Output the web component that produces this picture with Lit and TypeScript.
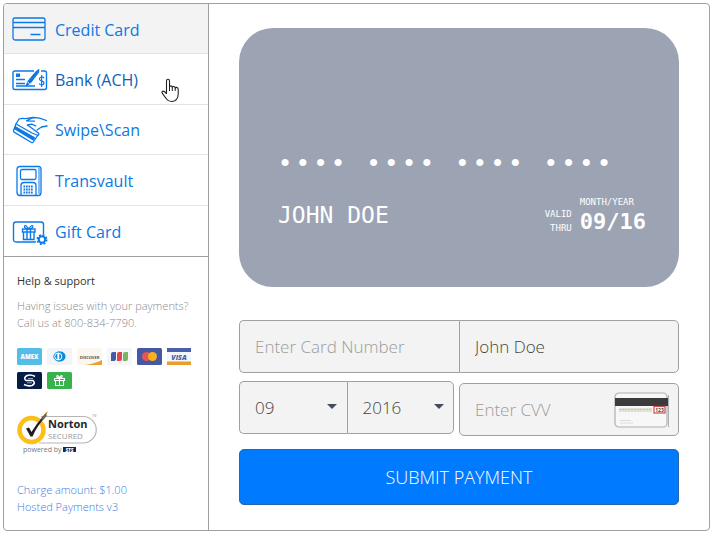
import { LitElement, html, svg, css } from "lit";
import { customElement, state } from "lit/decorators.js";

const creditIcon = svg`<svg viewBox="0 0 36 30" class="icon" aria-hidden="true">
  <g fill="none" stroke="currentColor" stroke-width="1.3">
    <rect x="1" y="3" width="32" height="22" rx="2"/>
    <path d="M1 7.5h32M1 12.500h32M18.500 19.500h10"/>
  </g></svg>`;

const bankIcon = svg`<svg viewBox="0 0 36 30" class="icon" aria-hidden="true">
  <g fill="none" stroke="currentColor" stroke-width="1.4">
    <path d="M22 6H3Q1 6 1 8v14.500q0 2 2 2h29.500q2 0 2-2V8q0-2-2-2H29"/>
    <path d="M4 14.500h9M4 18.500h9M4 21h19" stroke-width="1.5"/>
    <path d="M14 21l2-5 8.500-10 2.500-1.500-.5 3L18.500 18z" fill="currentColor" stroke-width="1"/>
    <path d="M15.500 17l2 1.500" stroke="#fff" stroke-width="1"/>
    <path d="M32 13.200q-1-1.400-2.700-1.200-2 .4-1.900 2 .2 1.400 2.200 1.900 2.400.6 2.400 2.200-.2 1.700-2.200 1.900-1.900 0-2.700-1.500M29.600 10v12" stroke-width="1.2"/>
  </g>
  <rect x="4" y="8.500" width="4" height="3.500" fill="currentColor"/></svg>`;

const swipeIcon = svg`<svg viewBox="0 -1 36 30" class="icon" aria-hidden="true">
  <g fill="none" stroke="currentColor" stroke-width="1.3" stroke-linejoin="round" stroke-linecap="round">
    <path d="M4 8L1.500 14.500q-.3 1 .6 1.600L19.500 26.500q1.200.5 1.800-.5l4.400-6.500"/>
    <path d="M4 8l3-5q3-1.200 6.500-.3L21 1.500l6.500.7L34.500 4.500"/>
    <path d="M5 8.500l15 8.500 6 2.500q1.600-1.500.3-2.500l-6-4.500-5-3.500 4.500-.8 4 1.800"/>
    <path d="M21 1.500l-6.500 3.300 8 .4M25 14l4.500-3L35 10"/>
  </g>
  <path d="M3.200 10L23.300 21.500l-2 3.200L1.900 13z" fill="currentColor"/></svg>`;

const terminalIcon = svg`<svg viewBox="0 0 36 32" class="icon" aria-hidden="true">
  <g fill="none" stroke="currentColor" stroke-width="1.300">
    <path d="M26.500 1.500H8q-3 0-3 3v23q0 3 3 3h18.500q2.500 0 2.500-3v-23q0-3-2.500-3z"/>
    <path d="M27 3v26" stroke-width="1"/>
    <rect x="8.500" y="4.500" width="15.500" height="10" rx="1.500"/>
    <path d="M9 30V20.500q0-3 3-3h9q3 0 3 3V30"/>
  </g>
  <g fill="currentColor">
    ${[20.5, 23.5, 26.5].map((y) => [11.5, 14, 16.5, 19].map((x) => svg`<rect x=${x} y=${y} width="1.700" height="2"/>`))}
  </g></svg>`;

const giftIcon = svg`<svg viewBox="0 0 36 30" class="icon" aria-hidden="true">
  <g fill="none" stroke="currentColor" stroke-width="1.400">
    <path d="M24 25H4q-2.500 0-2.500-2.500V7.500Q1.500 5 4 5h25q2.500 0 2.500 2.500V17"/>
    <rect x="10.500" y="12" width="12.500" height="3"/>
    <path d="M11.500 15v7.500h10.500V15M15 12v10.500M18.500 12v10.500"/>
    <path d="M16.700 12Q12 11.500 12.500 9.200q.8-2 4.200 2.600 3.400-4.600 4.200-2.600.5 2.300-4.200 2.800z" stroke-width="1.200"/>
    <circle cx="30" cy="22.500" r="3.200" stroke-width="2"/>
    <circle cx="30" cy="22.500" r="4.700" stroke-width="1.600" stroke-dasharray="2 1.690"/>
  </g></svg>`;

const brand = (name: string, body: unknown) =>
  svg`<svg viewBox="0 0 25 17" class="brand" role="img" aria-label=${name}>${body}</svg>`;

const brands = [
  brand("American Express", svg`<rect width="25" height="17" rx="1.500" fill="#55bce8"/>
    <text x="12.500" y="11" text-anchor="middle" font-size="6" font-weight="800" fill="#fff">AMEX</text>`),
  brand("Diners Club", svg`<rect width="25" height="17" rx="1.500" fill="#f1f4f8"/>
    <path d="M11 3.500h2.500a5 5 0 0 1 0 10H11z" fill="#0a8bd8"/><circle cx="11.300" cy="8.500" r="4.400" fill="#fff" stroke="#0a8bd8"/>
    <path d="M10.300 5.500a3.200 3.200 0 0 0 0 6zM12.300 5.500a3.200 3.200 0 0 1 0 6z" fill="#0a8bd8"/>`),
  brand("Discover", svg`<rect width="25" height="17" rx="1.500" fill="#fbf7ef"/>
    <path d="M25 12v5H8Q18 15.500 25 12z" fill="#e9a02c"/>
    <text x="12.500" y="10.500" text-anchor="middle" font-size="4" font-weight="700" fill="#555">DISCOVER</text>`),
  brand("JCB", svg`<rect width="25" height="17" rx="1.500" fill="#f4f6fa"/>
    <path d="M4 13V6q0-2 2-2h3v7q0 2-2 2z" fill="#4459a8"/><path d="M10 13V6q0-2 2-2h3v7q0 2-2 2z" fill="#e0444e"/>
    <path d="M16 13V6q0-2 2-2h3v7q0 2-2 2z" fill="#7ab661"/>`),
  brand("Mastercard", svg`<rect width="25" height="17" rx="1.500" fill="#4458a6"/>
    <circle cx="9.500" cy="8.500" r="4.500" fill="#e8554e"/><circle cx="15.500" cy="8.500" r="4.500" fill="#f8b31c"/>`),
  brand("Visa", svg`<rect width="24" height="17" rx="1" fill="#f4f6fa"/><path d="M0 0h24v4H0z" fill="#4a60ab"/><path d="M0 13.500h24V17H0z" fill="#e6a02a"/>
    <text x="12" y="11.500" text-anchor="middle" font-size="7" font-weight="800" font-style="italic" fill="#4a60ab">VISA</text>`),
  brand("Star", svg`<rect width="25" height="17" rx="1.500" fill="#071d45"/>
    <path d="M18 4.500Q14 2 10 3.500 6 6 9 8.500h7q3 3-1 5-4 1-8-1" fill="none" stroke="#fff" stroke-width="1.600"/>
    <path d="M11 6.500h5M10 10.800h5" stroke="#8fa6c8"/>`),
  brand("Gift card", svg`<rect width="25" height="17" rx="1.500" fill="#34b44a"/>
    <g fill="none" stroke="#fff" stroke-width="1.100"><path d="M7.500 6.500h10v2h-10zM8.500 8.500v5h8v-5M12.500 6.500v7M12.500 6.500Q9 5.500 10 3.700q1.500-.7 2.500 2.800 1-3.500 2.500-2.800 1 1.800-2.500 2.800"/></g>`),
];

const norton = svg`<svg viewBox="0 0 82 46" class="norton" role="img" aria-label="Norton Secured, powered by STS">
  <path d="M24 5.500h42a13.200 13.200 0 0 1 0 26.500H22" fill="none" stroke="#b5b5b5" stroke-width="1.200"/>
  <circle cx="14.500" cy="19" r="12" fill="#fff" stroke="#fcbf17" stroke-width="4.500"/>
  <path d="M9 17.500l3-1 2.500 4.500Q20 12 26 5.500l2 1Q20 15 15.500 25.500h-2z" fill="#1e1e1e"/>
  <path d="M23 8.500l6-7 1.500-.500L29 4.500l1.500-.500-4 4.500z" fill="#6b6250"/>
  <path d="M28.500 2.500l2-2" stroke="#fcbf17"/>
  <text x="31" y="17" font-size="11" font-weight="700" fill="#262626">Norton</text>
  <text x="31" y="28" font-size="8" fill="#999">SECURED</text>
  <text x="75" y="6" font-size="3" fill="#999">TM</text>
  <text x="6" y="41" font-size="7" fill="#777">powered by</text>
  <rect x="46" y="36" width="13" height="5" fill="#12295a"/>
  <text x="52.500" y="40.500" text-anchor="middle" font-size="5" font-weight="800" font-style="italic" fill="#fff">STS</text>
</svg>`;

const cvvIcon = svg`<svg viewBox="0 0 56 36" class="cvv-icon" aria-hidden="true">
  <rect x="1" y="1" width="52" height="34" rx="4" fill="#f7f7f7" stroke="#b0b0b4" stroke-width="1.200"/>
  <path d="M1 6h54v8H1z" fill="#3b3b3d"/>
  <path d="M54.500 3v32" stroke="#b0b0b4"/>
  <path d="M5 16h33v4H5z" fill="#e3e2d2"/><path d="M5 17.500h33" stroke="#c9c7ac" stroke-dasharray="2 1"/>
  <path d="M6 28.500h11M6 31h13" stroke="#dcdcdc"/>
  <rect x="40" y="14.500" width="11" height="6.500" fill="#fff" stroke="#cf4a50" stroke-width="1.200"/>
  <text x="45.500" y="20" text-anchor="middle" font-size="5" font-weight="700" fill="#444">123</text></svg>`;

const pointer = svg`<svg viewBox="0 0 18 25" class="pointer" aria-hidden="true">
  <path d="M5.500 14V3q0-1.800 1.500-1.800T8.500 3v6q.3-1.200 1.400-1.100 1.300.1 1.400 1.500.4-1 1.500-.9 1.200.1 1.400 1.600.4-.8 1.300-.7 1.700.2 1.700 2.200V16q0 3-1.500 5-1.500 2.500-5 2.500-3.500 0-5.200-2.500L1.200 15.200q-.7-1.500.5-2 1.300-.3 3.800 2.300z" fill="#fff" stroke="#222" stroke-width="1.100" stroke-linejoin="round"/>
  <path d="M8.500 9v4M11.300 9.500V13M14.200 10v3" stroke="#222"/></svg>`;

const methods = [
  { label: "Credit Card", icon: creditIcon },
  { label: "Bank (ACH)", icon: bankIcon },
  { label: "Swipe\\Scan", icon: swipeIcon },
  { label: "Transvault", icon: terminalIcon },
  { label: "Gift Card", icon: giftIcon },
];

@customElement("app-root")
export class AppRoot extends LitElement {
  @state() private selected = 0;

  static styles = css`
    :host { display: block; padding: 3px 6px 6px 3px; background: #fff; font-family: "Open Sans", "Noto Sans", sans-serif; }
    * { box-sizing: border-box; }
    .frame { display: grid; grid-template-columns: 205px 1fr; border: 1px solid #a0a0a4; border-radius: 4px; overflow: hidden; }
    .side { border-right: 1px solid #a0a0a4; }
    .nav { display: grid; grid-auto-rows: 1fr; min-height: 253px; border-bottom: 1px solid #a0a0a4; }
    .item { position: relative; display: flex; align-items: center; gap: 7px; padding: 2px 0 0 8px; border: 0; border-bottom: 1px solid #e4e4e6;
      background: #fff; color: #0a78e6; font: 400 16px "Open Sans", sans-serif; text-align: left; }
    .item:last-child { border-bottom: 0; }
    .item.on { background: #f3f3f3; }
    .item.hot { color: #0d62b8; }
    .icon { width: 36px; height: 32px; flex: none; color: #0a78e6; }
    .pointer { position: absolute; left: 157px; top: 24px; width: 18px; height: 25px; }
    .help { padding: 15px 12px 0 13px; font-size: 11px; line-height: 17px; }
    .help h2 { margin: 0 0 8px; font-size: 11px; font-weight: 400; color: #333; }
    .help p { margin: 0; font-weight: 300; color: #8a8a8e; white-space: nowrap; }
    .brands { display: flex; flex-wrap: wrap; gap: 7px 5px; margin: 17px 0 22px; }
    .brand { width: 25px; height: 17px; }
    .norton { display: block; width: 82px; height: 46px; margin-bottom: 24px; }
    .links { display: grid; justify-items: start; }
    .links a { color: #3f7ce0; font-weight: 300; text-decoration: none; }
    .main { padding: 24px 30px 25px; }
    .card { display: flex; flex-direction: column; justify-content: flex-end; height: 259px; padding: 0 33px 52px 39px; border-radius: 34px;
      background: #9ca3b3; color: #fff; font-family: "DejaVu Sans Mono", monospace; }
    .dots { display: flex; justify-content: space-between; padding: 0 38px 0 3px; margin-bottom: 21px; font: 26px/24px "Liberation Sans", sans-serif; }
    .dot { width: 8px; display: flex; justify-content: center; }
    .line { display: flex; justify-content: space-between; align-items: flex-end; }
    .name { font-size: 23px; line-height: 26px; margin-bottom: 7px; }
    .valid { display: flex; align-items: flex-end; gap: 8px; font-size: 9px; line-height: 14px; }
    .thru { text-align: right; width: min-content; }
    .date { font-size: 22px; line-height: 26px; font-weight: 700; }
    form { margin: 33px 0 0; display: grid; grid-template-columns: 1fr 1fr; row-gap: 8px; }
    .box, .sel { display: block; width: 100%; min-width: 0; height: 53px; border: 1px solid #a0a0a4; background: #f3f3f3; color: #444; border-radius: 5px;
      padding: 0 15px; font: 300 17px "Open Sans", sans-serif; outline: 0; margin: 0; appearance: none; }
    .box::placeholder { color: #9c9c9c; opacity: 1; }
    .left { border-radius: 5px 0 0 5px; border-right: 0; }
    .right { border-radius: 0 5px 5px 0; }
    .selects { display: grid; grid-template-columns: 1fr 1fr; padding-right: 5px; }
    .pick { position: relative; display: block; }
    .pick::after { content: ""; position: absolute; right: 10px; top: 23px; border: 5px solid transparent; border-top-color: #454d5c; border-bottom: 0; pointer-events: none; }
    .cvv { position: relative; padding-top: 2px; }
    .cvv-icon { position: absolute; right: 9px; top: 11px; width: 56px; height: 36px; }
    .submit { grid-column: 1 / -1; height: 56px; margin-top: 5px; border: 1px solid #2566ad; border-radius: 5px; background: #007aff; color: #fff;
      font: 300 18px "Open Sans", sans-serif; }
  `;

  render() {
    return html`<div class="frame">
      <aside class="side">
        <nav class="nav" aria-label="Payment method">
          ${methods.map((m, i) => html`<button type="button" class="item ${i === this.selected ? "on" : ""} ${i === 1 ? "hot" : ""}"
            @click=${() => (this.selected = i)}>${m.icon}<span>${m.label}</span>${i === 1 ? pointer : ""}</button>`)}
        </nav>
        <section class="help">
          <h2>Help &amp; support</h2>
          <p>Having issues with your payments?</p>
          <p>Call us at 800-834-7790.</p>
          <div class="brands">${brands}</div>
          ${norton}
          <div class="links"><a href="#charge">Charge amount: $1.00</a><a href="#version">Hosted Payments v3</a></div>
        </section>
      </aside>
      <main class="main">
        <div class="card">
          <div class="dots">${Array.from("•••• •••• •••• ••••", (c) => html`<span class="dot">${c}</span>`)}</div>
          <div class="line">
            <div class="name">JOHN DOE</div>
            <div class="valid"><div class="thru">VALID THRU</div><div><div>MONTH/YEAR</div><div class="date">09/16</div></div></div>
          </div>
        </div>
        <form @submit=${(e: Event) => e.preventDefault()}>
          <input class="box left" aria-label="Card number" placeholder="Enter Card Number" />
          <input class="box right" aria-label="Name on card" value="John Doe" />
          <div class="selects">
            <label class="pick"><select class="sel left" aria-label="Month"><option>09</option><option>10</option></select></label>
            <label class="pick"><select class="sel right" aria-label="Year"><option>2016</option><option>2017</option></select></label>
          </div>
          <div class="cvv"><input class="box" aria-label="CVV" placeholder="Enter CVV" />${cvvIcon}</div>
          <button class="submit">SUBMIT PAYMENT</button>
        </form>
      </main>
    </div>`;
  }
}
